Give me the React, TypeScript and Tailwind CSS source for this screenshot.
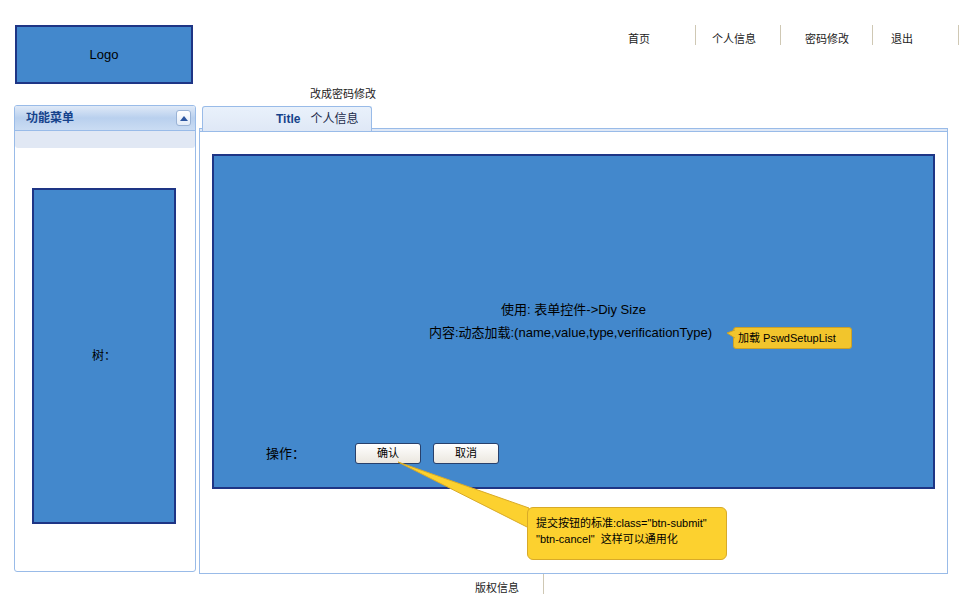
import React from 'react';

const FONT = '"Liberation Sans", "Noto Sans CJK SC", sans-serif';

const navItems = [
  { label: '首页', w: 'w-[96px]', pl: 'pl-[28px]' },
  { label: '个人信息', w: 'w-[85px]', pl: 'pl-[16px]' },
  { label: '密码修改', w: 'w-[92px]', pl: 'pl-[24px]' },
  { label: '退出', w: 'w-[86px]', pl: 'pl-[18px]' },
];

function Header() {
  return (
    <div>
      <div className="flex items-start justify-between pt-[25px]">
        <div className="ml-[15px] w-[178px] h-[59px] border-2 border-[#1e3585] bg-[#4388cc] flex items-center justify-center text-[13px] text-black">
          Logo
        </div>
        <div className="flex h-[20px] mr-[1px]">
          {navItems.map((item) => (
            <div
              key={item.label}
              className={`${item.w} ${item.pl} h-full flex items-end border-r border-[#cfc8b4] text-[11px] leading-[12px] text-[#222]`}
            >
              {item.label}
            </div>
          ))}
        </div>
      </div>
      <div className="ml-[310px] mt-[3px] text-[11px] leading-[14px] text-[#222]">改成密码修改</div>
    </div>
  );
}

function LeftPanel() {
  return (
    <div className="ml-[14px] w-[182px] h-[467px] border border-[#99bbe8] rounded-[3px] bg-white overflow-hidden">
      {/* Header */}
      <div className="h-[25px] border-b border-[#99bbe8] bg-gradient-to-b from-[#dfe9f7] via-[#b9d0ee] to-[#cadcf3] flex items-center justify-between pl-[11px] pr-[4px]">
        <span className="text-[12px] font-bold text-[#15428b]">功能菜单</span>
        <div className="w-[15px] h-[16px] rounded-[3px] border border-[#9ab3d6] bg-gradient-to-b from-white to-[#e3ecf8] flex items-center justify-center">
          <svg width="8" height="5" viewBox="0 0 8 5">
            <polygon points="4,0 8,5 0,5" fill="#2d56a0" />
          </svg>
        </div>
      </div>
      <div className="h-[17px] bg-[#e1e8f4] rounded-b-[3px]" />
      {/* Tree */}
      <div className="mt-[40px] ml-[17px] w-[144px] h-[336px] border-2 border-[#1e3585] bg-[#4388cc] flex items-center justify-center text-[12px] text-black">
        树：
      </div>
    </div>
  );
}

function MainPanel() {
  return (
    <div className="ml-[3px] w-[749px] flex flex-col">
      {/* Tab */}
      <div className="relative z-10 mt-[1px] ml-[3px] w-[170px] h-[25px] -mb-[3px] border border-b-0 border-[#99bbe8] rounded-t-[3px] bg-gradient-to-b from-[#e9f1fb] to-[#dfe8f6] flex items-center pl-[73px] gap-[10px]">
        <span className="text-[12px] font-bold text-[#15428b]">Title</span>
        <span className="text-[12px] text-[#1c2b4a]">个人信息</span>
      </div>
      {/* Panel */}
      <div className="h-[446px] border border-[#99bbe8] bg-white">
        <div className="h-[3px] bg-[#dfe8f6] border-b border-[#99bbe8]" />
        <div className="relative mt-[22px] ml-[12px] w-[723px] h-[335px] border-2 border-[#1e3585] bg-[#4388cc] flex flex-col pt-[146px] text-black">
          <div className="text-center text-[13px] leading-[16px]">使用: 表单控件-&gt;Diy Size</div>
          <div className="mt-[7px] text-center text-[13px] leading-[16px] pr-[6px]">
            内容:动态加载:(name,value,type,verificationType)
          </div>
          <div className="mt-[102px] flex items-center h-[21px] pl-[52px]">
            <span className="text-[13px] w-[89px]">操作：</span>
            <button className="w-[66px] h-[21px] rounded-[3px] border border-[#28406b] bg-gradient-to-b from-white to-[#ebe7df] text-[11px] text-black">
              确认
            </button>
            <button className="ml-[12px] w-[66px] h-[21px] rounded-[3px] border border-[#28406b] bg-gradient-to-b from-white to-[#ebe7df] text-[11px] text-black">
              取消
            </button>
          </div>

          {/* small callout */}
          <div className="absolute left-[519px] top-[171px] w-[119px] h-[22px] rounded-[3px] border border-[#caa028] bg-[#f2c52c] flex items-center pl-[4px] text-[11px] text-black">
            <svg className="absolute -left-[7px] top-[1px]" width="8" height="10" viewBox="0 0 8 10">
              <polygon points="8,1 0,4 8,9" fill="#f2c52c" />
              <polyline points="8,1 0,4 8,9" fill="none" stroke="#caa028" strokeWidth="1" />
            </svg>
            加载 PswdSetupList
          </div>
        </div>
      </div>
    </div>
  );
}

function Footer() {
  return (
    <div className="flex items-start ml-[475px]">
      <span className="mt-[8px] text-[11px] leading-[12px] text-[#222]">版权信息</span>
      <div className="ml-[24px] w-px h-[20px] bg-[#cfc8b4]" />
    </div>
  );
}

export default function App() {
  return (
    <div className="relative w-[960px] h-[600px] bg-white overflow-hidden" style={{ fontFamily: FONT }}>
      <Header />
      <div className="flex items-start mt-[4px]">
        <LeftPanel />
        <MainPanel />
      </div>
      <Footer />

      {/* big callout pointer */}
      <svg className="absolute left-0 top-0 pointer-events-none" width="960" height="600">
        <polygon points="398,462 529,508 529,528" fill="#fcd12f" stroke="#d8aa28" strokeWidth="1" />
      </svg>
      <div className="absolute left-[527px] top-[507px] w-[200px] h-[53px] rounded-[6px] border border-[#d8aa28] bg-[#fcd12f] pl-[8px] pt-[7px] text-[11px] leading-[16px] text-black">
        <div>提交按钮的标准:class="btn-submit"</div>
        <div>"btn-cancel"&nbsp;&nbsp;这样可以通用化</div>
      </div>
    </div>
  );
}
